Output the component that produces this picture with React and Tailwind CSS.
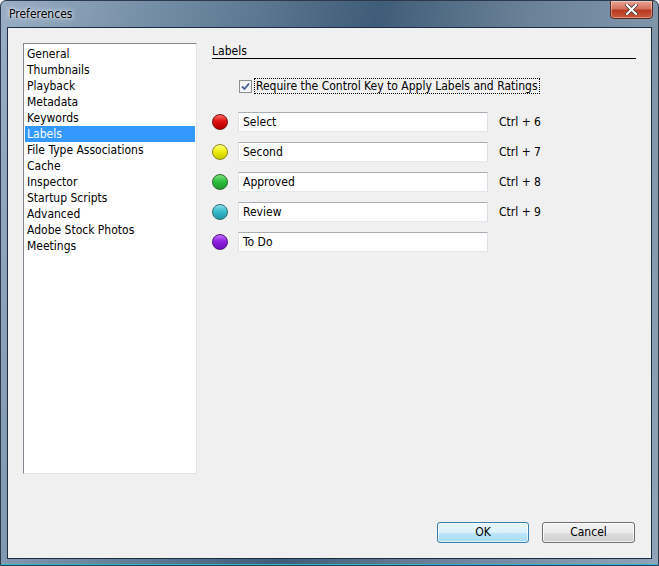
import React from "react";

const items = [
  "General",
  "Thumbnails",
  "Playback",
  "Metadata",
  "Keywords",
  "Labels",
  "File Type Associations",
  "Cache",
  "Inspector",
  "Startup Scripts",
  "Advanced",
  "Adobe Stock Photos",
  "Meetings",
];

const labels = [
  { name: "Select", key: "Ctrl + 6", c1: "#ff6a6a", c2: "#e01010", c3: "#b00000", b: "#7a1010" },
  { name: "Second", key: "Ctrl + 7", c1: "#ffff80", c2: "#eeee10", c3: "#c8c800", b: "#8a8a20" },
  { name: "Approved", key: "Ctrl + 8", c1: "#7ee07e", c2: "#30c040", c3: "#1f9a2c", b: "#2a6a2a" },
  { name: "Review", key: "Ctrl + 9", c1: "#8ae0ea", c2: "#38bccc", c3: "#1f98a8", b: "#2a6a74" },
  { name: "To Do", key: "", c1: "#c070ff", c2: "#9020e0", c3: "#7010c0", b: "#501080" },
];

function Dot({ l }) {
  return (
    <div
      className="w-[16px] h-[16px] rounded-full shrink-0"
      style={{
        background: `linear-gradient(to bottom, ${l.c1} 0%, ${l.c2} 45%, ${l.c3} 100%)`,
        border: `1px solid ${l.b}`,
      }}
    />
  );
}

export default function App() {
  return (
    <div
      className="w-[659px] h-[566px] relative overflow-hidden flex flex-col rounded-t-[6px] border border-[#2a3a4c]"
      style={{
        fontFamily: '"DejaVu Sans Condensed", "DejaVu Sans", sans-serif',
        background:
          "linear-gradient(100deg, #98aec4 0%, #7d96ae 15%, #5a7690 35%, #3f5c78 50%, #6a8298 70%, #7f96ab 88%, #8fa4b8 100%)",
      }}
    >
      {/* title bar */}
      <div className="h-[26px] shrink-0 flex items-start relative">
        <div className="pl-[8px] pt-[6px] text-[12px] leading-[14px] text-black" style={{ textShadow: "0 0 6px rgba(255,255,255,0.9), 0 0 3px rgba(255,255,255,0.9)" }}>
          Preferences
        </div>
        <div className="absolute right-[5px] top-[-1px] w-[43px] h-[19px] rounded-b-[4px] border border-[#5a2a22] flex items-center justify-center"
          style={{ background: "linear-gradient(to bottom, #e8a596 0%, #d4735e 45%, #b83a20 55%, #c85a3c 100%)", boxShadow: "inset 0 0 0 1px rgba(255,255,255,0.35)" }}>
          <svg width="13" height="11" viewBox="0 0 13 11">
            <path d="M2 1 L11 10 M11 1 L2 10" stroke="#3a2a2a" strokeWidth="3.6" strokeLinecap="square" />
            <path d="M2 1 L11 10 M11 1 L2 10" stroke="#ffffff" strokeWidth="2.2" strokeLinecap="square" />
          </svg>
        </div>
      </div>

      {/* client area */}
      <div className="flex-1 mx-[6px] mb-[6px] border border-[#1c2c3e] bg-[#f0f0f0] flex flex-col pt-[15px] pl-[15px] pr-[16px] pb-[15px] text-[12px] text-black">
        <div className="flex flex-1 min-h-0">
          {/* list */}
          <div className="w-[174px] h-[431px] shrink-0 bg-white border-t border-l border-t-[#828790] border-l-[#828790] border-r border-b border-r-[#e3e3e3] border-b-[#e3e3e3] pt-[2px] pl-[1px]">
            {items.map((it) => (
              <div
                key={it}
                className={
                  "h-[16px] leading-[16px] pl-[2px] mr-[1px] " +
                  (it === "Labels" ? "bg-[#3399ff] text-white" : "text-black")
                }
              >
                {it}
              </div>
            ))}
          </div>

          {/* right panel */}
          <div className="flex-1 ml-[15px] pt-[1px]">
            <div className="h-[15px] leading-[14px] border-b border-black w-[424px]">Labels</div>
            <div className="flex items-center mt-[19px] ml-[27px] h-[16px]">
              <div className="w-[13px] h-[13px] border border-[#8e8f8f] bg-[#f4f4f4] flex items-center justify-center mt-[1px]">
                <svg width="9" height="9" viewBox="0 0 9 9">
                  <path d="M1 4.5 L3.5 7 L8 1.5" stroke="#4a5f97" strokeWidth="1.8" fill="none" />
                </svg>
              </div>
              <div className="ml-[2px] px-[1px] h-[16px] leading-[15px] border border-dotted border-black">
                Require the Control Key to Apply Labels and Ratings
              </div>
            </div>
            <div className="mt-[18px] flex flex-col gap-[10px]">
              {labels.map((l) => (
                <div key={l.name} className="flex items-center h-[20px]">
                  <Dot l={l} />
                  <div className="ml-[10px] w-[250px] h-[20px] bg-white border border-t-[#abadb3] border-l-[#e2e3ea] border-r-[#dbdfe6] border-b-[#e3e9ef] pl-[4px] leading-[18px]">
                    {l.name}
                  </div>
                  <div className="ml-[11px]">{l.key}</div>
                </div>
              ))}
            </div>
          </div>
        </div>

        {/* buttons */}
        <div className="flex justify-end gap-[13px] mt-[47px]">
          <button
            className="w-[92px] h-[21px] rounded-[3px] border border-[#3c7fb1] text-[12px] leading-[19px] text-black"
            style={{ background: "linear-gradient(to bottom, #eaf6fd 0%, #d9f0fc 50%, #bee6fd 51%, #a7d9f5 100%)", boxShadow: "inset 0 0 0 1px rgba(255,255,255,0.6)" }}
          >
            OK
          </button>
          <button
            className="w-[93px] h-[21px] rounded-[3px] border border-[#707070] text-[12px] leading-[19px] text-black"
            style={{ background: "linear-gradient(to bottom, #f2f2f2 0%, #ebebeb 50%, #dddddd 51%, #cfcfcf 100%)", boxShadow: "inset 0 0 0 1px rgba(255,255,255,0.7)" }}
          >
            Cancel
          </button>
        </div>
      </div>
      <div className="absolute left-0 right-0 bottom-0 h-[1px] bg-[#3ab0e0]" />
    </div>
  );
}
